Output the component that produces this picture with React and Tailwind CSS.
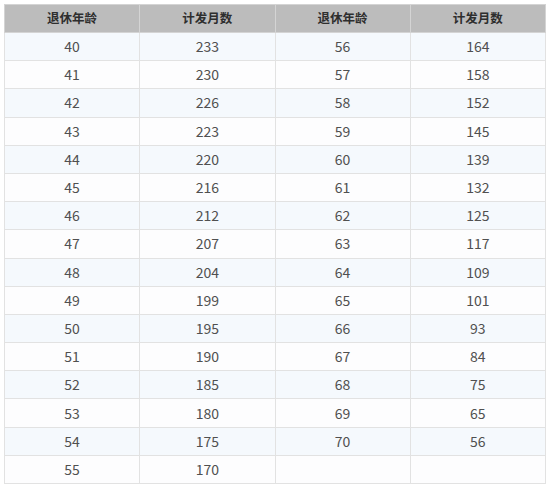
import React from 'react';

const left = [
  [40, 233], [41, 230], [42, 226], [43, 223], [44, 220], [45, 216], [46, 212], [47, 207],
  [48, 204], [49, 199], [50, 195], [51, 190], [52, 185], [53, 180], [54, 175], [55, 170],
];
const right = [
  [56, 164], [57, 158], [58, 152], [59, 145], [60, 139], [61, 132], [62, 125], [63, 117],
  [64, 109], [65, 101], [66, 93], [67, 84], [68, 75], [69, 65], [70, 56], ['', ''],
];

export default function App() {
  return (
    <div
      className="w-[550px] h-[488px] bg-white pt-[4px] pl-[4px]"
      style={{ fontFamily: '"Noto Sans CJK SC", "Noto Sans", sans-serif' }}
    >
      <table className="w-[542px] border-collapse table-fixed text-[14px] text-[#505050]">
        <thead>
          <tr className="h-[28px] bg-[#bcbcbc] text-[#2e2e2e] text-[12.5px]">
            {['退休年龄', '计发月数', '退休年龄', '计发月数'].map((h, i) => (
              <th key={i} className="border border-[#d4d4d4] font-semibold p-0">{h}</th>
            ))}
          </tr>
        </thead>
        <tbody>
          {left.map((row, i) => (
            <tr key={i} className={`h-[28.2px] ${i % 2 === 0 ? 'bg-[#f5f9fd]' : 'bg-[#fdfdfe]'}`}>
              <td className="border border-[#e2e2e2] text-center p-0">{row[0]}</td>
              <td className="border border-[#e2e2e2] text-center p-0">{row[1]}</td>
              <td className="border border-[#e2e2e2] text-center p-0">{right[i][0]}</td>
              <td className="border border-[#e2e2e2] text-center p-0">{right[i][1]}</td>
            </tr>
          ))}
        </tbody>
      </table>
    </div>
  );
}
